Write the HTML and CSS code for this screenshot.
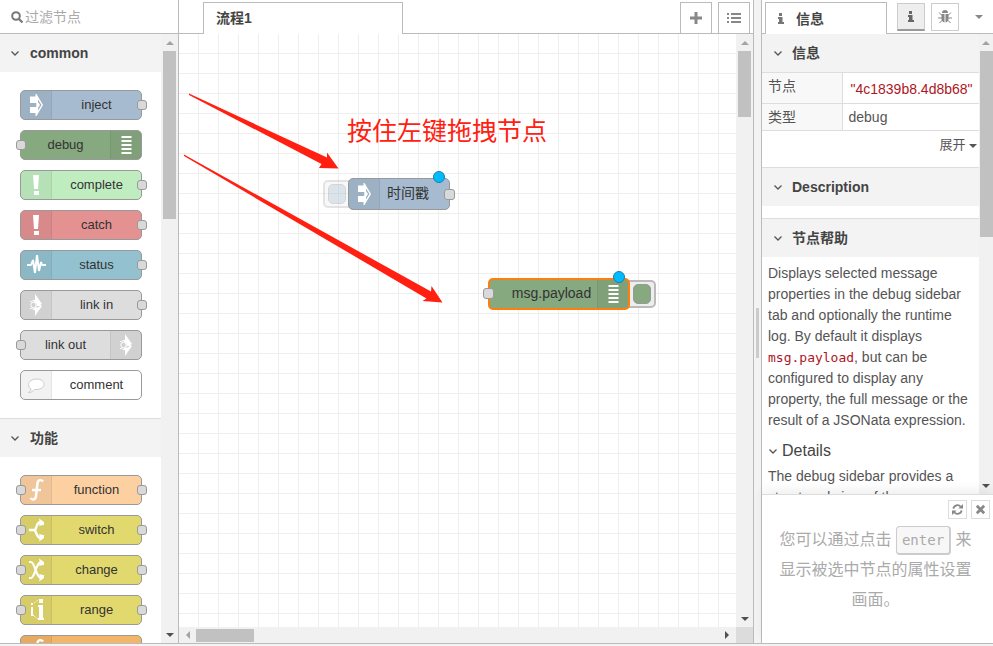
FILE: index.html
```
<!DOCTYPE html>
<html lang="zh-CN">
<head>
<meta charset="utf-8">
<title>Node-RED</title>
<link rel="stylesheet" href="styles.css">
</head>
<body>
<svg class="defs" aria-hidden="true">
  <defs>
    <symbol id="i-inject" viewBox="0 0 30 30"><path fill="#fff" fill-rule="evenodd" d="M9 6.500h5.500V4h1L22 15l-6.500 11h-1v-3H9v-6h6.500v-4H9zM17 9.500V20.500L20.500 15z"/><path fill="#fff" d="M15 9l4 6-4 6v-4h.500v-4H15z"/></symbol>
    <symbol id="i-debug" viewBox="0 0 30 30"><path stroke="#fff" stroke-width="2" d="M10.500 7h10M10.500 11h10M10.500 15h10M10.500 19h10M10.500 23h10" /></symbol>
    <symbol id="i-bang" viewBox="0 0 30 30"><path fill="#fff" d="M12 5h6l-1 14h-4zM13 21h5v4h-5z"/></symbol>
    <symbol id="i-status" viewBox="0 0 30 30"><path fill="none" stroke="#fff" stroke-width="2" stroke-linejoin="bevel" d="M6 15h4l2-5 2 13 2-18 2 16 2-9 1 3h4"/></symbol>
    <symbol id="i-link" viewBox="0 0 30 30"><path fill="#fff" d="M14 4l7 10h-5l-5-4h3zM14 26l7-10h-5l-5 4h3zM15.500 12l5.500 3-5.500 3z"/><path fill="none" stroke="#fff" d="M9 11.500c1.500 0 2 .3 3 1M9 18.500c1.500 0 2-.3 3-1"/><circle cx="12.500" cy="15" r="2.700" fill="#d0d0d0" stroke="#fff"/></symbol>
    <symbol id="i-comment" viewBox="0 0 30 30"><path fill="#fff" stroke="#ccc" d="M15.500 9c5 0 7.500 2.500 7.500 5.300s-3 5.200-7.500 5.200h-2c-1.500 2-3.500 3-6 3 2-1 2.500-2 2.500-3.500-1.500-1-2.500-2.500-2.500-4.500 0-3 3.500-5.500 8-5.500z"/></symbol>
    <symbol id="i-fn" viewBox="0 0 30 30"><path fill="none" stroke="#fff" stroke-width="2.400" d="M22 6.500c-1.500-2-5-2-5.500 1.500l-1.500 13c-.5 4-4 4.500-5.500 2M11 15h9"/></symbol>
    <symbol id="i-switch" viewBox="0 0 30 30"><path fill="none" stroke="#fff" stroke-width="2.400" d="M8 15h6c2-2 1-8 6-8M13 15c3 1 2 8 7 8"/><path fill="#fff" d="M18 3.500l5 3.500v3h-1l-4 1 1-3.500zM18 26.500l5-3.500v-3h-1l-4-1 1 3.500z"/></symbol>
    <symbol id="i-change" viewBox="0 0 30 30"><path fill="none" stroke="#fff" stroke-width="2.200" d="M8 7h2c4 0 5 16 10 16M8 23h2c4 0 5-16 10-16"/><path fill="#fff" d="M18 3.500l5 3.500v3h-1l-4 1 1-3.500zM18 26.500l5-3.500v-3h-1l-4-1 1 3.500z"/></symbol>
    <symbol id="i-range" viewBox="0 0 30 30"><path fill="#fff" d="M18 4h4v4h-4zM17 10h5v13h1v2h-6v-2h1V12h-1zM10 8h2v2h-2zM10 12h2v8h1v1h-3z"/><path stroke="#fff" stroke-width=".7" stroke-dasharray="2 1" d="M13 8l4-3M13 21l4 3"/></symbol>
    <symbol id="i-chev" viewBox="0 0 10 10"><path fill="none" stroke="#555" stroke-width="1.300" d="M1.500 3.500L5 7l3.500-3.500"/></symbol>
    <symbol id="i-up" viewBox="0 0 8 4"><path d="M0 4l4-4 4 4z"/></symbol>
    <symbol id="i-down" viewBox="0 0 8 4"><path d="M0 0l4 4 4-4z"/></symbol>
    <symbol id="i-info" viewBox="0 0 6 11"><path d="M1 0h3v3H1zM0 4h4.500v5H6v2H0V9h1V6H0z"/></symbol>
    <symbol id="i-bug" viewBox="0 0 14 14"><path d="M4 3a3 3 0 0 1 6 0z"/><path d="M3.500 4h3v8.500a4 4 0 0 1-3-4zM7.500 4h3v4.500a4 4 0 0 1-3 4z"/><path fill="none" stroke="#888" d="M1 2.500l3 3M13 2.500l-3 3M0 8h4M10 8h4M1.500 13l3-3M12.500 13l-3-3"/></symbol>
  </defs>
</svg>
<main class="editor">
  <aside class="palette">
    <label class="search">
      <svg class="search-icon" viewBox="0 0 12 12"><circle cx="5" cy="5" r="3.800" fill="none" stroke="#777" stroke-width="2"/><path stroke="#777" stroke-width="2.200" d="M8 8l3.500 3.500"/></svg>
      <input type="text" placeholder="过滤节点" aria-label="过滤节点">
    </label>
    <div class="scroller">
      <div class="palette-list">
        <section>
          <h2 class="heading"><svg><use href="#i-chev"/></svg>common</h2>
          <div class="nodes">
            <div class="node inject out"><span class="icon"><svg><use href="#i-inject"/></svg></span><span class="name">inject</span></div>
            <div class="node debug in flip"><span class="icon"><svg><use href="#i-debug"/></svg></span><span class="name">debug</span></div>
            <div class="node complete out"><span class="icon"><svg><use href="#i-bang"/></svg></span><span class="name">complete</span></div>
            <div class="node catch out"><span class="icon"><svg><use href="#i-bang"/></svg></span><span class="name">catch</span></div>
            <div class="node status out"><span class="icon"><svg><use href="#i-status"/></svg></span><span class="name">status</span></div>
            <div class="node link out"><span class="icon"><svg><use href="#i-link"/></svg></span><span class="name">link in</span></div>
            <div class="node link in flip"><span class="icon"><svg><use href="#i-link"/></svg></span><span class="name">link out</span></div>
            <div class="node comment"><span class="icon"><svg><use href="#i-comment"/></svg></span><span class="name">comment</span></div>
          </div>
        </section>
        <section class="ruled">
          <h2 class="heading"><svg><use href="#i-chev"/></svg>功能</h2>
          <div class="nodes">
            <div class="node function in out"><span class="icon"><svg><use href="#i-fn"/></svg></span><span class="name">function</span></div>
            <div class="node logic in out"><span class="icon"><svg><use href="#i-switch"/></svg></span><span class="name">switch</span></div>
            <div class="node logic in out"><span class="icon"><svg><use href="#i-change"/></svg></span><span class="name">change</span></div>
            <div class="node logic in out"><span class="icon"><svg><use href="#i-range"/></svg></span><span class="name">range</span></div>
            <div class="node template"><span class="icon"><svg><use href="#i-fn"/></svg></span></div>
          </div>
        </section>
      </div>
      <div class="bar"><svg class="off"><use href="#i-up"/></svg><i class="thumb long"></i><svg><use href="#i-down"/></svg></div>
    </div>
  </aside>

  <section class="workspace">
    <div class="tabs">
      <a class="tab flow" href="#flow">流程1</a>
      <button class="tool" aria-label="添加流程"><svg viewBox="0 0 12 12"><path stroke="#888" stroke-width="3" d="M6 0v12M0 6h12"/></svg></button>
      <button class="tool" aria-label="流程列表"><svg class="wide" viewBox="0 0 14 12"><path stroke="#888" stroke-width="2" d="M0 2h2M4 2h10M0 6h2M4 6h10M0 10h2M4 10h10"/></svg></button>
    </div>
    <div class="stage">
      <div class="canvas">
        <svg class="arrows" viewBox="0 0 300 300"><path fill="#ff2012" d="M10 59.500l138 64 0-5 11.500 16-19.500-.5 2.500-4L10 61zM5 120.500l247 137 .5-5.500 11 16.500-20-1.500 4-2.500L5 122z"/></svg>
        <p class="note">按住左键拖拽节点</p>
        <button class="trigger left" aria-label="注入"></button>
        <div class="placed first"><div class="node inject out"><span class="icon"><svg><use href="#i-inject"/></svg></span><span class="name">时间戳</span></div><i class="dot"></i></div>
        <button class="trigger right" aria-label="启用"></button>
        <div class="placed second"><div class="node debug in flip selected"><span class="icon"><svg><use href="#i-debug"/></svg></span><span class="name">msg.payload</span></div><i class="dot"></i></div>
      </div>
      <div class="bar"><svg class="off"><use href="#i-up"/></svg><i class="thumb short"></i><svg><use href="#i-down"/></svg></div>
      <div class="hbar"><svg class="off" viewBox="0 0 4 8"><path d="M4 0L0 4l4 4z"/></svg><i class="hthumb"></i><svg viewBox="0 0 4 8"><path d="M0 0l4 4-4 4z"/></svg></div>
      <div class="corner"></div>
    </div>
  </section>

  <div class="separator"><i></i></div>

  <aside class="sidebar">
    <div class="tabs">
      <a class="tab info" href="#info"><svg><use href="#i-info"/></svg>信息</a>
      <button class="square active" aria-label="信息"><svg class="i"><use href="#i-info"/></svg></button>
      <button class="square" aria-label="调试"><svg><use href="#i-bug"/></svg></button>
      <button class="more" aria-label="更多"><svg><use href="#i-down"/></svg></button>
    </div>
    <div class="scroller">
      <div class="info-list">
        <section>
          <h2 class="heading"><svg><use href="#i-chev"/></svg>信息</h2>
          <table>
            <tr><th>节点</th><td class="id">"4c1839b8.4d8b68"</td></tr>
            <tr><th>类型</th><td>debug</td></tr>
          </table>
          <div class="expand"><a href="#more">展开 <svg><use href="#i-down"/></svg></a></div>
        </section>
        <section class="ruled description">
          <h2 class="heading"><svg><use href="#i-chev"/></svg>Description</h2>
        </section>
        <section class="ruled">
          <h2 class="heading"><svg><use href="#i-chev"/></svg>节点帮助</h2>
          <div class="help">
            <p>Displays selected message properties in the debug sidebar tab and optionally the runtime log. By default it displays <code>msg.payload</code>, but can be configured to display any property, the full message or the result of a JSONata expression.</p>
            <h3><svg><use href="#i-chev"/></svg>Details</h3>
            <p>The debug sidebar provides a structured view of the</p>
          </div>
        </section>
      </div>
      <div class="bar"><svg class="off"><use href="#i-up"/></svg><i class="thumb mid"></i><svg><use href="#i-down"/></svg></div>
    </div>
    <div class="tips">
      <div class="tip-tools">
        <button aria-label="刷新"><svg viewBox="0 0 12 12"><path fill="none" stroke="#888" stroke-width="2" d="M1.500 5a4.500 4.500 0 0 1 8-2M10.500 7a4.500 4.500 0 0 1-8 2"/><path fill="#888" d="M12 0v5H7zM0 12V7h5z"/></svg></button>
        <button aria-label="关闭"><svg viewBox="0 0 12 12"><path stroke="#888" stroke-width="3" d="M2 2l8 8M10 2l-8 8"/></svg></button>
      </div>
      <p>您可以通过点击 <kbd>enter</kbd> 来显示被选中节点的属性设置画面。</p>
    </div>
  </aside>
</main>
</body>
</html>
```
FILE: styles.css
```
*, *::before, *::after { box-sizing: border-box; }
body {
  margin: 0;
  height: 100vh;
  overflow: hidden;
  background: #f3f3f3;
  color: #444;
  font: 14px/20px "Liberation Sans", "Noto Sans CJK SC", sans-serif;
}
h2, h3, p { margin: 0; }
a { color: inherit; text-decoration: none; }
button { padding: 0; font: inherit; background: #fff; border: 1px solid #bbb; }
.defs { position: absolute; width: 0; height: 0; }

.editor {
  display: grid;
  grid-template-columns: 179px minmax(0, 1fr) 7px 232px;
  height: calc(100vh - 2px);
  border-bottom: 1px solid #bbb;
}
.palette, .workspace, .sidebar {
  display: flex;
  flex-direction: column;
  min-width: 0;
  min-height: 0;
  background: #fff;
}
.palette, .workspace { border-right: 1px solid #bbb; }
.sidebar { border-left: 1px solid #bbb; }

.search {
  display: flex;
  flex: none;
  align-items: center;
  gap: 2px;
  height: 34px;
  padding-left: 11px;
  border-bottom: 1px solid #bbb;
}
.search-icon { flex: none; width: 12px; height: 12px; }
.search input {
  width: 100%;
  min-width: 0;
  padding: 0;
  border: 0;
  outline: 0;
  font: inherit;
}
.search input::placeholder { color: #aaa; }

.scroller { display: flex; flex: 1; min-height: 0; overflow: hidden; }
.palette-list, .info-list { flex: 1; min-width: 0; overflow: hidden; }
.heading {
  display: flex;
  align-items: center;
  gap: 10px;
  height: 38px;
  padding-left: 10px;
  background: #f3f3f3;
  font-size: 14px;
  line-height: 20px;
}
.heading svg { width: 10px; height: 10px; }
.ruled { border-top: 1px solid #ddd; }
.nodes { display: flex; flex-direction: column; gap: 10px; padding: 18px 19px 18px 20px; }

.node {
  position: relative;
  display: flex;
  height: 30px;
  border: 1px solid #999;
  border-radius: 5px;
  color: #333;
  font-size: 13px;
  line-height: 28px;
}
.icon { flex: none; width: 31px; background: rgba(0, 0, 0, .05); border-right: 1px solid rgba(0, 0, 0, .06); border-radius: 4px 0 0 4px; }
.icon svg { display: block; width: 30px; height: 30px; margin: -1px 0; }
.name { flex: 1; text-align: center; }
.flip { flex-direction: row-reverse; }
.flip .icon { border-right: 0; border-left: 1px solid rgba(0, 0, 0, .06); border-radius: 0 4px 4px 0; }
.in::before, .out::after {
  content: "";
  position: absolute;
  top: 9px;
  width: 10px;
  height: 10px;
  border: 1px solid #999;
  border-radius: 3px;
  background: #d9d9d9;
}
.in::before { left: -5px; }
.out::after { right: -6px; }
.inject { background: #a6bbcf; }
.debug { background: #87a980; }
.complete { background: #c0edc0; }
.catch { background: #e49191; }
.status { background: #94c1d0; }
.link { background: #ddd; }
.comment { background: #fff; }
.function { background: #fdd0a2; }
.logic { background: #e2d96e; }
.template { background: #f3b567; }

.bar {
  display: flex;
  flex: none;
  flex-direction: column;
  align-items: center;
  width: 17px;
  padding: 7px 0 6px;
  background: #f1f1f1;
}
.bar svg, .hbar svg { flex: none; fill: #505050; }
.bar svg { width: 8px; height: 4px; }
.bar .off, .hbar .off { fill: #a3a3a3; }
.thumb { flex: none; width: 13px; margin: 6px 0 auto; background: #c1c1c1; }
.long { height: 168px; }
.short { height: 66px; }
.mid { height: 186px; }

.tabs { display: flex; flex: none; height: 34px; border-bottom: 1px solid #bbb; }
.tab {
  height: 32px;
  margin: 2px 0 -1px;
  border: 1px solid #bbb;
  border-bottom: 0;
  background: #fff;
  font-weight: bold;
  line-height: 30px;
}
.flow { flex: 0 1 200px; margin-left: 24px; margin-right: auto; padding-left: 12px; }
.tool { width: 32px; height: 31px; margin: 2px 0 0 6px; border-bottom: 0; }
.tool:last-child { margin-right: 3px; }
.tool svg { display: block; width: 12px; height: 12px; margin: auto; }
.tool .wide { width: 14px; }

.stage {
  display: grid;
  flex: 1;
  grid-template-columns: minmax(0, 1fr) 17px;
  grid-template-rows: minmax(0, 1fr) 16px;
  min-height: 0;
}
.canvas {
  position: relative;
  overflow: hidden;
  background-image: linear-gradient(to right, transparent 19px, #eee 19px), linear-gradient(transparent 19px, #eee 19px);
  background-size: 20px 20px;
}
.hbar { display: flex; align-items: center; padding: 0 7px; background: #f1f1f1; }
.hbar svg { width: 4px; height: 8px; }
.hthumb { width: 58px; height: 13px; margin: 0 auto 0 6px; background: #c1c1c1; }
.corner { background: #dcdcdc; }

.arrows { position: absolute; top: 0; left: 0; width: 300px; height: 300px; }
.note {
  position: absolute;
  top: 79px;
  left: 168px;
  color: #ff2012;
  font-size: 25px;
  line-height: 36px;
  white-space: nowrap;
}
.placed { position: absolute; }
.first { left: 169px; top: 144px; width: 102px; }
.second { left: 309px; top: 244px; width: 142px; }
.placed .node { height: 32px; font-size: 14px; line-height: 28px; }
.placed .icon svg { margin: 0; }
.placed .in::before, .placed .out::after { top: 10px; width: 11px; height: 11px; }
.first .name { padding-right: 13px; }
.second .name { padding-left: 16px; }
.placed .selected { border: 2px solid #ff7f0e; line-height: 26px; }
.placed .selected .icon svg { margin: -1px 0; }
.placed .selected::before { left: -7px; top: 8px; }
.dot {
  position: absolute;
  top: -7px;
  right: 5px;
  width: 12px;
  height: 12px;
  border: 1px solid #1b7eb0;
  border-radius: 50%;
  background: #00bcff;
}
.trigger {
  position: absolute;
  width: 34px;
  height: 28px;
  border: 2px solid #bbb;
  border-radius: 5px;
  background: #eee;
}
.trigger::before {
  content: "";
  position: absolute;
  top: 2px;
  width: 18px;
  height: 20px;
  border: 1px solid #999;
  border-radius: 5px;
}
.trigger.left { left: 144px; top: 146px; opacity: .4; }
.trigger.left::before { left: 3px; background: #a6bbcf; }
.trigger.right { left: 443px; top: 246px; }
.trigger.right::before { right: 3px; background: #87a980; }

.separator { display: flex; align-items: center; justify-content: center; padding-top: 22px; }
.separator i { width: 3px; height: 50px; background: #ccc; }

.info { display: flex; flex: 0 0 122px; align-items: center; gap: 12px; margin-left: 3px; margin-right: 10px; padding-left: 12px; }
.info svg { width: 6px; height: 11px; fill: #777; }
.square { width: 28px; height: 28px; margin: 3px 6px 0 0; border-color: #ccc; }
.square svg { display: block; width: 14px; height: 14px; margin: auto; fill: #888; }
.square .i { width: 6px; height: 11px; fill: #666; }
.active { background: #eee; border-bottom: 2px solid #999; }
.more { margin: 0 0 0 10px; border: 0; }
.more svg { display: block; width: 8px; height: 4px; fill: #888; }

.info-list { color: #555; }
.info-list .heading { color: #444; padding-left: 11px; gap: 9px; }
.sidebar .bar { width: 14px; }
table { width: 100%; border-collapse: collapse; }
th, td { padding: 3px 6px; border-top: 1px solid #ddd; border-bottom: 1px solid #ddd; text-align: left; font-weight: normal; vertical-align: top; }
th { width: 80px; background: #f8f8f8; border-right: 1px solid #ddd; }
td.id { padding: 6px 6px 4px 8px; color: #ad1625; }
.expand { height: 36px; padding: 4px 2px 0; text-align: right; font-size: 13px; }
.expand svg { width: 8px; height: 4px; vertical-align: middle; fill: #555; }
.description { padding-bottom: 12px; }
.help { padding: 6px; line-height: 21px; }
.help code { color: #ad1625; font: 13px/20px "DejaVu Sans Mono", monospace; }
.help h3 { display: flex; align-items: center; gap: 4px; margin: 9px 0 5px; color: #444; font-size: 16px; font-weight: normal; line-height: 21px; }
.help h3 svg { width: 10px; height: 10px; }

.tips {
  position: relative;
  flex: none;
  height: 149px;
  padding: 30px 18px 0 14px;
  border-top: 1px solid #ddd;
  box-shadow: 0 -5px 10px rgba(0, 0, 0, .06);
  background: #fff;
  color: #aaa;
  text-align: center;
  font-size: 16px;
  line-height: 30px;
}
.tip-tools { position: absolute; top: 5px; right: 3px; display: flex; gap: 4px; }
.tip-tools button { width: 19px; height: 19px; border-color: #ddd; }
.tip-tools svg { display: block; width: 11px; height: 11px; margin: auto; }
kbd {
  padding: 5px 4px;
  border: 1px solid #ccc;
  border-right-width: 2px;
  border-bottom-width: 2px;
  border-radius: 4px;
  background: #f7f7f7;
  font: 14px/20px "DejaVu Sans Mono", monospace;
}
.tips kbd { padding: 5px; }
```
